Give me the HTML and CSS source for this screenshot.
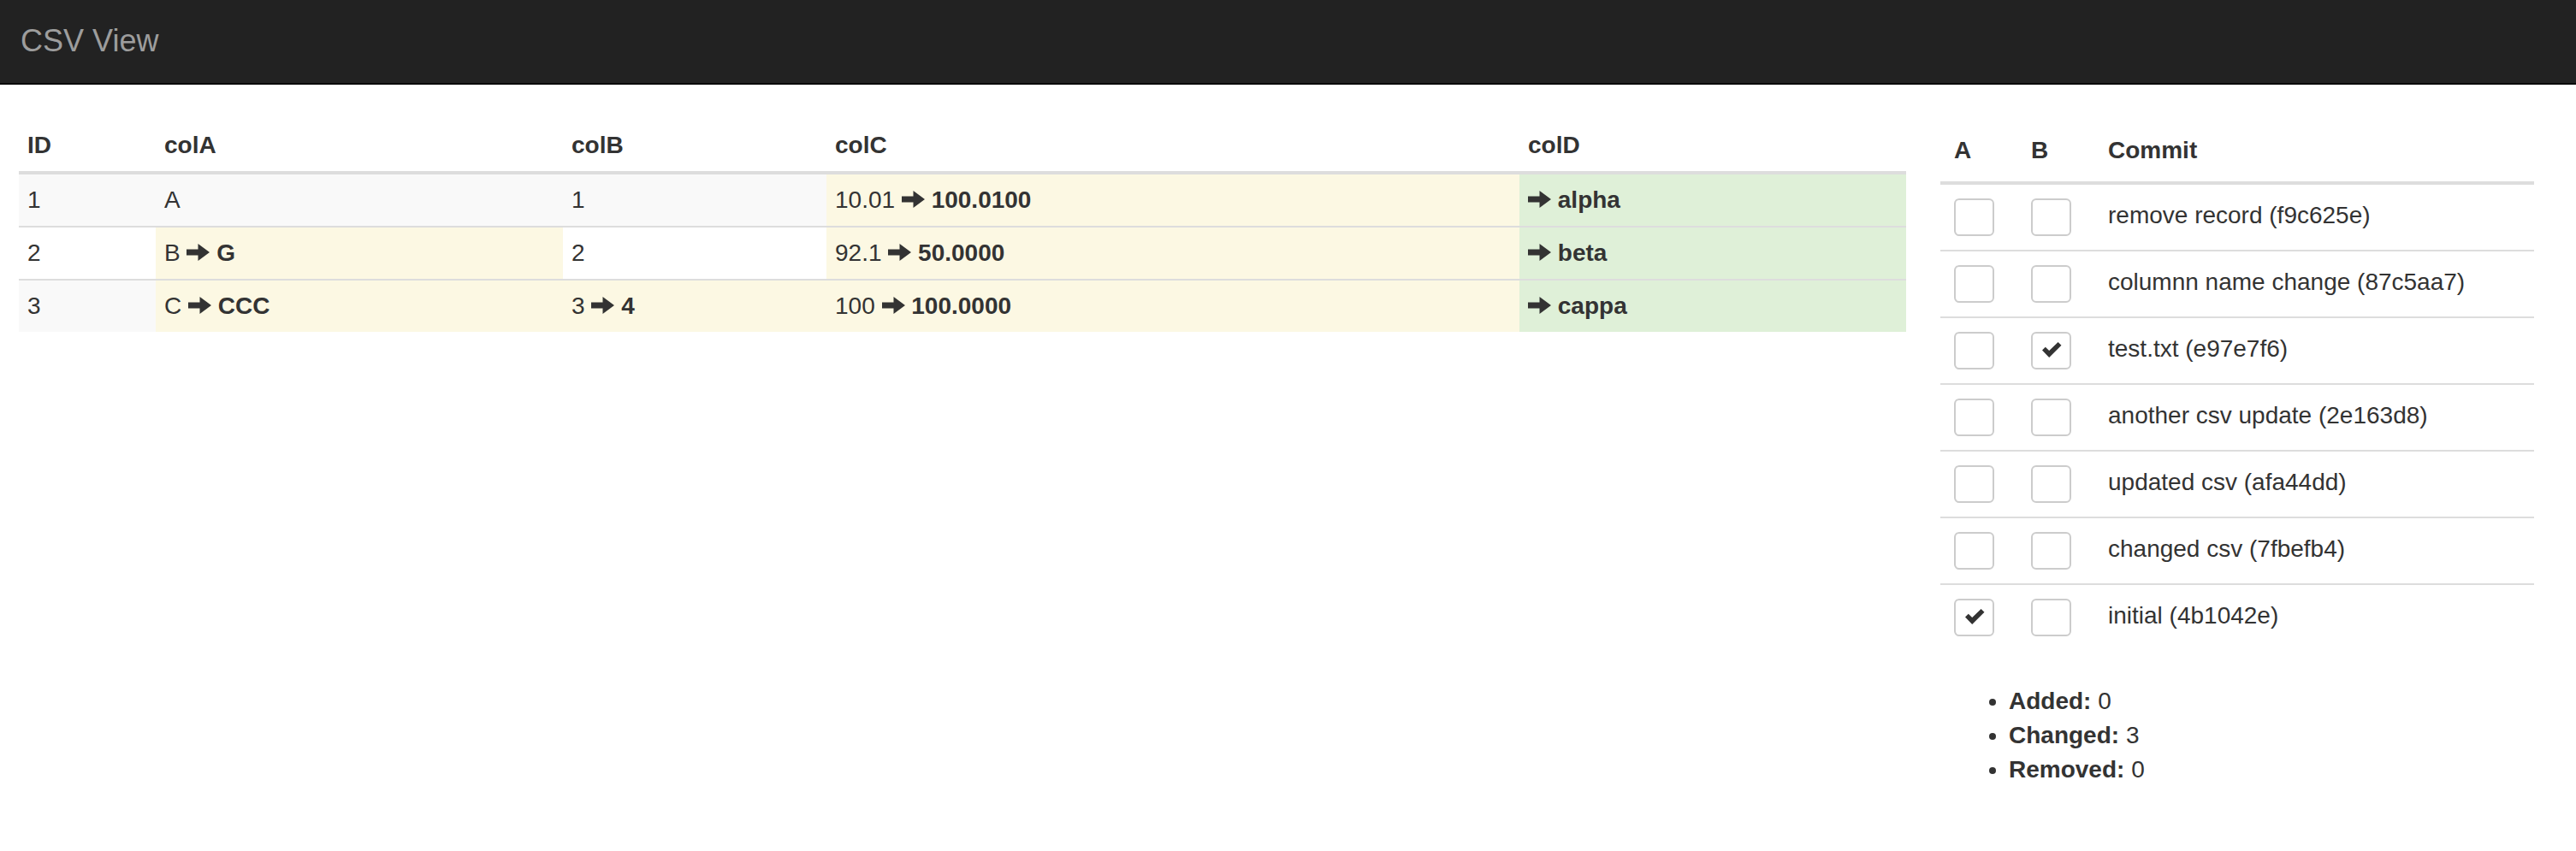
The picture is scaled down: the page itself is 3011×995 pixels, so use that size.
FILE: index.html
```html
<!DOCTYPE html>
<html lang="en">
<head>
<meta charset="utf-8">
<title>CSV View</title>
<link rel="stylesheet" href="styles.css">
</head>
<body>
<nav class="navbar">
  <span class="brand">CSV View</span>
</nav>
<main class="page">
  <section class="left">
    <table class="diff">
      <colgroup>
        <col class="c-id"><col class="c-a"><col class="c-b"><col class="c-c"><col class="c-d">
      </colgroup>
      <thead>
        <tr><th>ID</th><th>colA</th><th>colB</th><th>colC</th><th>colD</th></tr>
      </thead>
      <tbody>
        <tr>
          <td>1</td>
          <td>A</td>
          <td>1</td>
          <td class="chg">10.01 <svg class="arrow" viewBox="0 0 27 20"><path d="M0 6.5h13.5V0L27 10 13.5 20v-6.5H0z"/></svg> <b>100.0100</b></td>
          <td class="add"><svg class="arrow" viewBox="0 0 27 20"><path d="M0 6.5h13.5V0L27 10 13.5 20v-6.5H0z"/></svg> <b>alpha</b></td>
        </tr>
        <tr>
          <td>2</td>
          <td class="chg">B <svg class="arrow" viewBox="0 0 27 20"><path d="M0 6.5h13.5V0L27 10 13.5 20v-6.5H0z"/></svg> <b>G</b></td>
          <td>2</td>
          <td class="chg">92.1 <svg class="arrow" viewBox="0 0 27 20"><path d="M0 6.5h13.5V0L27 10 13.5 20v-6.5H0z"/></svg> <b>50.0000</b></td>
          <td class="add"><svg class="arrow" viewBox="0 0 27 20"><path d="M0 6.5h13.5V0L27 10 13.5 20v-6.5H0z"/></svg> <b>beta</b></td>
        </tr>
        <tr>
          <td>3</td>
          <td class="chg">C <svg class="arrow" viewBox="0 0 27 20"><path d="M0 6.5h13.5V0L27 10 13.5 20v-6.5H0z"/></svg> <b>CCC</b></td>
          <td class="chg">3 <svg class="arrow" viewBox="0 0 27 20"><path d="M0 6.5h13.5V0L27 10 13.5 20v-6.5H0z"/></svg> <b>4</b></td>
          <td class="chg">100 <svg class="arrow" viewBox="0 0 27 20"><path d="M0 6.5h13.5V0L27 10 13.5 20v-6.5H0z"/></svg> <b>100.0000</b></td>
          <td class="add"><svg class="arrow" viewBox="0 0 27 20"><path d="M0 6.5h13.5V0L27 10 13.5 20v-6.5H0z"/></svg> <b>cappa</b></td>
        </tr>
      </tbody>
    </table>
  </section>
  <aside class="right">
    <table class="commits">
      <colgroup><col class="c-chk"><col class="c-chk"><col class="c-msg"></colgroup>
      <thead>
        <tr><th>A</th><th>B</th><th>Commit</th></tr>
      </thead>
      <tbody>
        <tr><td><span class="box"></span></td><td><span class="box"></span></td><td>remove record (f9c625e)</td></tr>
        <tr><td><span class="box"></span></td><td><span class="box"></span></td><td>columnn name change (87c5aa7)</td></tr>
        <tr><td><span class="box"></span></td><td><span class="box"><svg class="check" viewBox="0 0 23 18"><path d="M0 9.5 3.8 5.7 8.2 10 18.6 0 22.5 3.8 8.2 18z"/></svg></span></td><td>test.txt (e97e7f6)</td></tr>
        <tr><td><span class="box"></span></td><td><span class="box"></span></td><td>another csv update (2e163d8)</td></tr>
        <tr><td><span class="box"></span></td><td><span class="box"></span></td><td>updated csv (afa44dd)</td></tr>
        <tr><td><span class="box"></span></td><td><span class="box"></span></td><td>changed csv (7fbefb4)</td></tr>
        <tr><td><span class="box"><svg class="check" viewBox="0 0 23 18"><path d="M0 9.5 3.8 5.7 8.2 10 18.6 0 22.5 3.8 8.2 18z"/></svg></span></td><td><span class="box"></span></td><td>initial (4b1042e)</td></tr>
      </tbody>
    </table>
    <ul class="stats">
      <li><b>Added:</b> 0</li>
      <li><b>Changed:</b> 3</li>
      <li><b>Removed:</b> 0</li>
    </ul>
  </aside>
</main>
</body>
</html>
```

FILE: styles.css
```css
* { box-sizing: border-box; }

html, body {
  margin: 0;
  padding: 0;
  background: #fff;
}

body {
  font-family: "Liberation Sans", Arial, Helvetica, sans-serif;
  font-size: 28px;
  line-height: 40px;
  color: #333;
}

.navbar {
  height: 99px;
  background: #222;
  border-bottom: 2px solid #080808;
  margin-bottom: 41px;
  padding: 28px 0 0 24px;
}

.brand {
  display: block;
  font-size: 36px;
  line-height: 40px;
  color: #9d9d9d;
}

.page {
  display: flex;
  align-items: flex-start;
  gap: 40px;
  padding-left: 22px;
}

.left { width: 2206px; flex: none; }
.right { width: 694px; flex: none; }

table {
  border-collapse: collapse;
  border-spacing: 0;
  table-layout: fixed;
  width: 100%;
}

th { text-align: left; font-weight: bold; }
b { font-weight: bold; }

/* diff table (condensed) */
.c-id { width: 160px; }
.c-a { width: 476px; }
.c-b { width: 308px; }
.c-c { width: 810px; }
.c-d { width: 452px; }

.diff th,
.diff td {
  padding: 10px;
  vertical-align: top;
  line-height: 40px;
}

.diff th { border-bottom: 4px solid #ddd; }
.diff td { border-top: 2px solid #ddd; }
.diff tbody tr:nth-child(odd) td { background: #f9f9f9; }
.diff tbody tr td.chg { background: #fcf8e3; }
.diff tbody tr td.add { background: #dff0d8; }

.arrow {
  width: 27px;
  height: 20px;
  vertical-align: 0;
  fill: #333;
}

/* commits table */
.c-chk { width: 90px; }
.c-msg { width: auto; }

.commits th,
.commits td {
  padding: 16px;
  vertical-align: top;
  line-height: 40px;
}

.commits th { border-bottom: 4px solid #ddd; }
.commits td { border-top: 2px solid #ddd; }

.box {
  display: inline-block;
  width: 47px;
  height: 44px;
  border: 2px solid #ccc;
  border-radius: 6px;
  background: #fff;
  vertical-align: top;
  position: relative;
}

.check {
  position: absolute;
  left: 11px;
  top: 10px;
  width: 23px;
  height: 18px;
  fill: #333;
}

.stats {
  margin: 40px 0 0;
  padding-left: 80px;
  list-style: disc;
  line-height: 40px;
}
```
